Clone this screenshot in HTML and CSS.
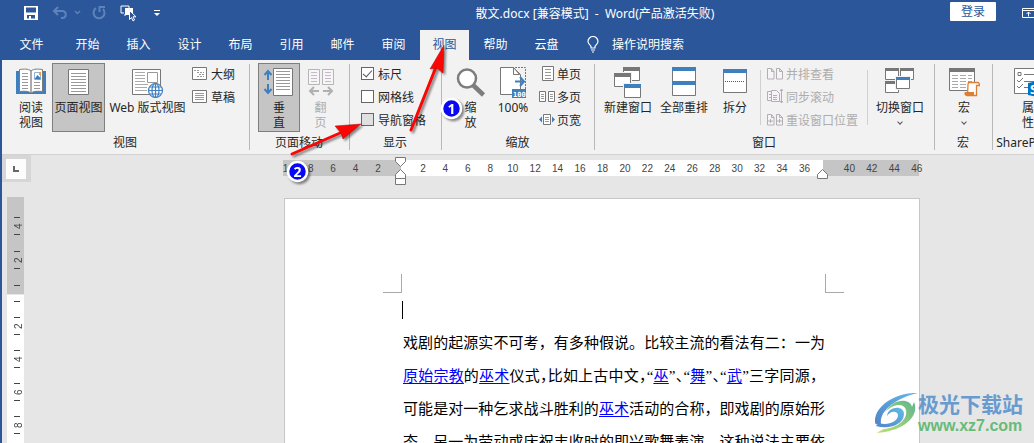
FILE: index.html
```html
<!DOCTYPE html>
<html lang="zh-CN">
<head>
<meta charset="utf-8">
<title>散文.docx - Word</title>
<link rel="stylesheet" href="styles.css">
</head>
<body>
<div class="window">
  <header class="titlebar">
    <div class="quick">
      <button class="qbtn save" aria-label="保存"><svg width="14" height="14" viewBox="0 0 14 14"><path fill="#fff" fill-rule="evenodd" d="M0 0h14v14H0zM2 1.500v5h10v-5zM3 9v3.500h2V10h2v2.500h4V9z"/></svg></button>
      <button class="qbtn undo" aria-label="撤消"><svg width="28" height="14" viewBox="0 0 28 14" fill="none" stroke="#5f82ba" stroke-width="2"><path d="M5 1L1 5l4 4M1 5h8c5 0 5 7 0 7H8"/><path stroke-width="1.300" d="M22 5l2.500 2.500L27 5"/></svg></button>
      <button class="qbtn redo" aria-label="重复"><svg width="14" height="14" viewBox="0 0 14 14" fill="none" stroke="#5f82ba" stroke-width="2"><path d="M4 2.200A5.500 5.500 0 1 0 11 3M7.500 6V1H13"/></svg></button>
      <button class="qbtn touch" aria-label="触摸/鼠标模式"><svg width="17" height="17" viewBox="0 0 17 17"><path d="M4 8H1V1h8v2M4 10h2" fill="none" stroke="#fff"/><path d="M5 3h8v6h-3L9 4v6H5z" fill="#fff"/><path d="M9.500 5.500v9l2-2 1.500 3.500 1.500-1-1.500-3.200h3z" fill="#2b579a" stroke="#fff"/></svg></button>
      <button class="qbtn" aria-label="自定义"><svg width="6" height="7" viewBox="0 0 6 7"><path fill="#fff" d="M0 0h6v1H0zM0 3h6L3 6z"/></svg></button>
    </div>
    <h1 class="doc-title">散文.docx [兼容模式]&nbsp; -&nbsp; Word(产品激活失败)</h1>
    <div class="account">
      <button class="login">登录</button>
      <button class="qbtn" aria-label="功能区显示选项"><svg width="13" height="10" viewBox="0 0 13 10"><path d="M.5.500h12v9H.5zM.5 2.500h12M6.500 8.500V4M4.500 6l2-2 2 2" fill="none" stroke="#fff"/></svg></button>
    </div>
  </header>

  <nav class="tabs">
    <button class="tab file">文件</button>
    <button class="tab">开始</button>
    <button class="tab">插入</button>
    <button class="tab">设计</button>
    <button class="tab">布局</button>
    <button class="tab">引用</button>
    <button class="tab">邮件</button>
    <button class="tab">审阅</button>
    <button class="tab active">视图</button>
    <button class="tab">帮助</button>
    <button class="tab">云盘</button>
    <button class="tell"><svg width="12" height="17" viewBox="0 0 12 17" fill="none" stroke="#fff" stroke-width="1.200"><path d="M4 12v-1.500C3.500 9 1 8 1 5.500a5 5 0 0 1 10 0C11 8 8.500 9 8 10.500V12zM4 14h4M5 16h2"/></svg>操作说明搜索</button>
  </nav>

  <section class="ribbon">
    <div class="group g-view">
      <div class="tools">
        <button class="big w38"><svg width="32" height="32" viewBox="0 0 32 32"><path fill="#3f7fbd" d="M1 4h4v20h9l2 1 2-1h9V4h4v23H1z"/><path fill="#fff" stroke="#7a7a7a" d="M16 4C13 1.500 9 2 4.500 2.500v22c5-.5 9-.5 11.500 1.500 2.500-2 6.500-2 11.500-1.500v-22C23 2 19 1.500 16 4zv22"/><path stroke="#999" d="M16 4v22M7 6.500h6M7 9.500h6M7 12.500h6M7 15.500h6M7 18.500h6M7 21.500h6M19 15.500h6M19 18.500h6M19 21.500h6"/><path fill="#fff" stroke="#8fb4d8" d="M19.500 5.500h6v7h-6z"/><path fill="#3f7fbd" d="M19.500 12l3-4 3 3v1.500z"/><path fill="#ed9b45" d="M24 5h2v3h-2z"/></svg><span>阅读<br>视图</span></button>
        <button class="big w53 on"><svg width="32" height="32" viewBox="0 0 32 32"><path fill="#fff" stroke="#777" d="M5.500 2.500h20v25h-20z"/><path stroke="#999" d="M8 6.500h15M8 9.500h15M8 12.500h15M8 15.500h15M8 18.500h15M8 21.500h15M8 24.500h15"/></svg><span>页面视图</span></button>
        <button class="big w83"><svg width="32" height="32" viewBox="0 0 32 32"><path fill="#fff" stroke="#777" d="M.5 2.500h28v25H.5z"/><path stroke="#aaa" d="M3 5.500h10M3 8.500h10M3 11.500h10M3 14.500h10M3 17.500h13M3 20.500h12M3 23.500h12"/><path fill="#fff" stroke="#999" d="M15.500 5.500h10v10h-10z"/><g fill="#fff" stroke="#3f7fbd" stroke-width="1.200"><circle cx="23.500" cy="23.500" r="7"/><ellipse cx="23.500" cy="23.500" rx="3.500" ry="7"/><path d="M23.500 16.500v14M16.500 23.500h14M18 20h11M18 27h11"/></g></svg><span>Web 版式视图</span></button>
        <div class="stack">
          <button class="small"><svg width="15" height="13" viewBox="0 0 15 13"><path fill="#fff" stroke="#777" d="M.5.500h14v12H.5z"/><path stroke="#999" stroke-dasharray="2 1" d="M2 3.500h5M5 5.500h7M7 7.500h6M5 9.500h7"/></svg>大纲</button>
          <button class="small"><svg width="15" height="13" viewBox="0 0 15 13"><path fill="#fff" stroke="#777" d="M.5.500h14v12H.5z"/><path stroke="#999" d="M3 3.500h9M3 5.500h9M3 7.500h9M3 9.500h9"/></svg>草稿</button>
        </div>
      </div>
      <h2>视图</h2>
    </div>

    <div class="group g-move">
      <div class="tools">
        <button class="big w42 on"><svg width="32" height="32" viewBox="0 0 32 32"><g fill="none" stroke="#3f7fbd" stroke-width="2"><path d="M5 5v8M1.500 8L5 4l3.500 4M5 17v9M1.500 22L5 26l3.500-4"/></g><path fill="#fff" stroke="#777" d="M10.500 1.500h19v27h-19z"/><path stroke="#999" d="M13 4.500h14M13 7.500h14M13 10.500h14M13 13.500h14M13 16.500h14M13 19.500h14M13 22.500h14"/></svg><span>垂<br>直</span></button>
        <button class="big w37" disabled><svg width="28" height="32" viewBox="0 0 28 32"><path fill="#f8f5f8" stroke="#b5b5b5" d="M1.500 2.500h11v15h-11zM15.500 2.500h11v15h-11z"/><path stroke="#c4bcc4" d="M4 5.500h6M4 8.500h6M4 11.500h6M4 14.500h6M18 5.500h6M18 8.500h6M18 11.500h6M18 14.500h6"/><path fill="none" stroke="#b0b0b0" stroke-width="2" d="M3 24h9M7 20l-4 4 4 4M16 24h9M21 20l4 4-4 4"/></svg><span>翻<br>页</span></button>
      </div>
      <h2>页面移动</h2>
    </div>

    <div class="group g-show">
      <div class="tools stack">
        <label class="check"><input type="checkbox" checked>标尺</label>
        <label class="check"><input type="checkbox">网格线</label>
        <label class="check"><input type="checkbox" class="hover">导航窗格</label>
      </div>
      <h2>显示</h2>
    </div>

    <div class="group g-zoom">
      <div class="tools">
        <button class="big w37"><svg width="32" height="32" viewBox="0 0 32 32"><path stroke="#7d7d7d" stroke-width="4.500" d="M18 18l10.500 10"/><circle cx="12" cy="11.500" r="9" fill="#fff" stroke="#7d7d7d" stroke-width="2.500"/></svg><span>缩<br>放</span></button>
        <button class="big w44"><svg width="30" height="32" viewBox="0 0 30 32"><path fill="none" stroke="#777" stroke-dasharray="2 1" d="M17 .5h10.500V22"/><path fill="#fff" stroke="#777" d="M2.500.500h13l7 7v20h-20z"/><path fill="#fff" stroke="#777" d="M15.500.500v7h6z"/><path fill="none" stroke="#3f7fbd" stroke-width="2" d="M17 14.500h9M22 10l4 4.500-4 4.500"/><path fill="#3f7fbd" d="M14 22h14v9H14z"/><text x="15" y="30" class="hundred">100</text></svg><span>100%</span></button>
        <div class="stack">
          <button class="small"><svg width="15" height="17" viewBox="0 0 15 17"><path fill="#fff" stroke="#777" d="M2.500 1.500h11v14h-11z"/><path stroke="#999" d="M5 4.500h6M5 7.500h6M5 10.500h6M5 13.500h6"/></svg>单页</button>
          <button class="small"><svg width="17" height="13" viewBox="0 0 17 13"><path fill="#fff" stroke="#777" d="M.5 1.500h6v10h-6zM9.500 1.500h6v10h-6z"/><path stroke="#999" d="M2 4.500h3M2 6.500h3M2 8.500h3M11 4.500h3M11 6.500h3M11 8.500h3"/></svg>多页</button>
          <button class="small"><svg width="17" height="13" viewBox="0 0 17 13"><path fill="#fff" stroke="#777" d="M4.500 1.500h7v10h-7z"/><path stroke="#999" d="M6 4.500h4M6 6.500h4M6 8.500h4"/><path fill="#3f7fbd" d="M3 3.500v6L0 6.500zM13 3.500v6l3-3z"/></svg>页宽</button>
        </div>
      </div>
      <h2>缩放</h2>
    </div>

    <div class="group g-window">
      <div class="tools">
        <button class="big w54"><svg width="32" height="32" viewBox="0 0 32 32"><path fill="#fff" stroke="#777" d="M11.500.500h16v13h-16z"/><path fill="#777" d="M11 0h17v4H11z"/><path fill="#f2f2f2" d="M1 5h19v16H1z"/><path fill="#fff" stroke="#777" d="M2.500 6.500h16v13h-16z"/><path fill="#777" d="M2 6h17v4H2z"/><path fill="#f2f2f2" d="M11 16h19v16H11z"/><path fill="#fff" stroke="#777" d="M12.500 17.500h16v13h-16z"/><path fill="#3f7fbd" d="M12 17h17v4H12z"/></svg><span>新建窗口</span></button>
        <button class="big w54"><svg width="32" height="32" viewBox="0 0 32 32"><path fill="#fff" stroke="#777" d="M4.500.500h23v28h-23z"/><path fill="#3f7fbd" d="M4 0h24v4H4zM4 14h24v4H4z"/></svg><span>全部重排</span></button>
        <button class="big w44"><svg width="32" height="32" viewBox="0 0 32 32"><path fill="#fff" stroke="#777" d="M4.500 2.500h23v23h-23z"/><path fill="#3f7fbd" d="M4 2h24v4H4z"/><path stroke="#555" stroke-dasharray="1 1" d="M6 14.500h20"/></svg><span>拆分</span></button>
        <div class="stack ruled">
          <button class="small" disabled><svg width="16" height="13" viewBox="0 0 16 13" fill="#f8f3f8" stroke="#b0b0b0"><path d="M.5 1.500h4l2.500 3v7.500H.5zM9.500 1.500h3l3 3v7.500h-6zM4.500 1.500v3H7M12.500 1.500v3h3"/></svg>并排查看</button>
          <button class="small" disabled><svg width="16" height="15" viewBox="0 0 16 15" fill="#f8f3f8" stroke="#b0b0b0"><path d="M4 2.500H.5v9H4M4.500 1.500h5l3 3v8h-8zM14.500 0v14M13 2l1.500-2L16 2M13 12l1.500 2 1.500-2M6 6.500h4M6 8.500h4M6 10.500h4M2 5.500h2M2 8.500h2"/></svg>同步滚动</button>
          <button class="small" disabled><svg width="16" height="13" viewBox="0 0 16 13" fill="#f8f3f8" stroke="#b0b0b0"><path d="M.5 1.500h4l2.500 3v7.500H.5zM9.500 1.500h3l3 3v7.500h-6zM4.500 1.500v3H7M12.500 1.500v3h3M1 8h5M3.500 6v4M10 8h5M12.500 6v4"/></svg>重设窗口位置</button>
        </div>
        <button class="big w60"><svg width="32" height="32" viewBox="0 0 32 32"><g fill="#fff" stroke="#777"><path d="M1.500 1.500h13v11h-13zM16.500 1.500h13v11h-13zM1.500 14.500h13v11h-13z"/></g><path fill="#777" d="M1 1h14v3H1zM16 1h14v3H16zM1 14h11v3H1z"/><path fill="#f2f2f2" d="M11 9h16v14H11z"/><path fill="#fff" stroke="#777" d="M12.500 10.500h13v11h-13z"/><path fill="#3f7fbd" d="M12 10h14v3H12z"/></svg><span>切换窗口</span><i class="chev"></i></button>
      </div>
      <h2>窗口</h2>
    </div>

    <div class="group g-macro">
      <div class="tools">
        <button class="big w44"><svg width="32" height="32" viewBox="0 0 32 32"><path fill="#fff" stroke="#777" d="M1.500 1.500h25v22h-25z"/><path fill="#777" d="M1 1h26v4H1z"/><path stroke="#aaa" stroke-dasharray="6 2" d="M4 8.500h20M4 11.500h20M4 14.500h20M4 17.500h16M4 20.500h14"/><path fill="#fff" stroke="#dd7f32" stroke-width="1.300" d="M20.500 15.500h9c2 0 2 3 2 3h-3v10h-9l.5-11z"/><path fill="#dd7f32" d="M17 25h9v4h-8c-2-1-2-3-1-4z"/></svg><span>宏</span><i class="chev"></i></button>
      </div>
      <h2>宏</h2>
    </div>

    <div class="group g-share">
      <div class="tools">
        <button class="big w44"><svg width="32" height="32" viewBox="0 0 32 32"><path fill="#fff" stroke="#777" d="M2.500 1.500h28v25h-28z"/><g fill="none" stroke="#777"><path d="M6 5.500h3v3H6zM12 7.500h12M12 14.500h12M12 20.500h5"/><path d="M5 13l2 2 4-4M5 19l2 2 4-4"/></g><path fill="#0072c6" d="M16 16l14-3v18l-14-3z"/><text x="18" y="27" class="sp">S</text></svg><span>属<br>性</span></button>
      </div>
      <h2>SharePoint</h2>
    </div>
  </section>

  <main class="workspace">
    <div class="corner"><button aria-label="左对齐制表符"><svg width="6" height="6" viewBox="0 0 6 6"><path fill="#666" d="M0 0h2v4h4v2H0z"/></svg></button></div>
    <div class="hruler">
      <div class="scale">
        <span>10</span><span>8</span><span>6</span><span>4</span><span>2</span><span></span><span>2</span><span>4</span><span>6</span><span>8</span><span>10</span><span>12</span><span>14</span><span>16</span><span>18</span><span>20</span><span>22</span><span>24</span><span>26</span><span>28</span><span>30</span><span>32</span><span>34</span><span>36</span><span></span><span>40</span><span>42</span><span>44</span><span>46</span>
      </div>
      <svg class="indent-left" width="12" height="28" viewBox="0 0 12 28"><path fill="#fff" stroke="#777" d="M.5.500h10v4l-5 5-5-5zM5.500 12.500l5 5v4H.5v-4zM.5 21.500h10v6H.5z"/></svg>
      <svg class="indent-right" width="12" height="11" viewBox="0 0 12 11"><path fill="#fff" stroke="#777" d="M5.500.500l5 5v4H.5v-4z"/></svg>
    </div>
    <div class="vruler">
      <div class="vpart margin"><b>4</b><b>2</b><i></i></div>
      <div class="vpart body"><i></i><b>2</b><b>4</b><b>6</b><b>8</b></div>
    </div>
    <article class="page">
      <div class="marks"><i class="mark-l"></i><i class="mark-r"></i></div>
      <div class="caret-line"><i class="caret"></i></div>
      <p>戏剧的起源实不可考，有多种假说。比较主流的看法有二：一为</p>
      <p><a href="#">原始宗教</a>的<a href="#">巫术</a>仪式<s>，</s>比如上古中文<s>，</s>“<a href="#">巫</a>”<s>、</s>“<a href="#">舞</a>”<s>、</s>“<a href="#">武</a>”三字同源，</p>
      <p>可能是对一种乞求战斗胜利的<a href="#">巫术</a>活动的合称，即戏剧的原始形</p>
      <p>态。另一为劳动或庆祝丰收时的即兴歌舞表演。这种说法主要依</p>
    </article>
  </main>

  <svg class="notes" width="470" height="190" viewBox="0 0 470 190">
    <g fill="#fb0505" stroke="#fb0505">
      <path stroke-width="3" stroke-linecap="round" d="M411 130L436 67M292 154L340 133"/>
      <path stroke="#a01010" stroke-width=".5" d="M444 45L443 73L437 68L430 69zM361 124L343 139L341 133L335 126z"/>
    </g>
    <g fill="#0808f5" stroke="#fff" stroke-width="2.500"><circle cx="451.500" cy="108.500" r="9.500"/><circle cx="297.500" cy="171.500" r="9.500"/></g>
    <text x="451.500" y="114">1</text><text x="297.500" y="177">2</text>
  </svg>

  <div class="watermark">
    <svg width="44" height="42" viewBox="0 0 44 42"><defs><linearGradient id="sw" x1="1" y1="0" x2="0" y2="1"><stop offset="0" stop-color="#62b9e8"/><stop offset="1" stop-color="#5385c6"/></linearGradient><linearGradient id="gr" x1="1" y1="0" x2="0" y2="1"><stop offset="0" stop-color="#5fb58d"/><stop offset="1" stop-color="#c0e070"/></linearGradient></defs><path fill="url(#sw)" d="M44 0C24-1 0 12 1 29c0 3 3 3 6 2C5 18 22 5 44 0z"/><path fill="url(#sw)" d="M5 30c8 3 19-1 19-8-1-5-8-4-11 1 1-10 17-11 17-2 0 10-14 16-28 12z"/><path fill="url(#gr)" d="M40 9c6 14-10 29-37 31 2-2 5-3 7-4 14-1 24-10 22-19-2-7-12-7-21 2C18 6 36 4 38 14z"/></svg>
    <div class="wm-text"><strong>极光下载站</strong><span>www.xz7.com</span></div>
  </div>
</div>
</body>
</html>
```
FILE: styles.css
```css
* { box-sizing: border-box; }
body {
  margin: 0;
  font-family: "Noto Sans", "Noto Sans CJK SC", sans-serif;
  font-size: 12px;
  color: #262626;
}
button {
  margin: 0;
  padding: 0;
  border: 0;
  background: none;
  font: inherit;
  color: inherit;
  white-space: nowrap;
}
h1, h2, p { margin: 0; font-size: inherit; font-weight: 400; }
svg { display: block; flex: none; }
.window {
  position: relative;
  display: flex;
  flex-direction: column;
  height: 100vh;
  overflow: hidden;
  border-left: 2px solid #2b579a;
  background: #e6e6e6;
}

.titlebar {
  display: flex;
  flex: none;
  height: 30px;
  padding-bottom: 4px;
  align-items: center;
  background: #2b579a;
  color: #fff;
}
.quick {
  display: flex;
  align-items: center;
  width: 238px;
  padding-left: 22px;
}
.save { margin-right: 15px; }
.undo { margin-right: 11px; }
.redo { margin-right: 14px; }
.touch { margin-right: 17px; }
.doc-title { flex: 1; text-align: center; }
.account {
  display: flex;
  align-items: center;
  gap: 26px;
  width: 84px;
}
.login {
  flex: none;
  width: 46px;
  height: 19px;
  margin-top: -3px;
  border-radius: 1px;
  background: #fff;
  color: #2b579a;
  line-height: 18px;
}

.tabs {
  display: flex;
  flex: none;
  gap: 2px;
  height: 30px;
  background: #2b579a;
  color: #fff;
}
.tab { width: 49px; padding-bottom: 2px; }
.file { width: 59px; }
.active { background: #f2f2f2; color: #2b579a; }
.tell {
  display: flex;
  align-items: center;
  gap: 13px;
  padding: 0 0 2px 14px;
}

.ribbon {
  display: flex;
  flex: none;
  height: 95px;
  overflow: hidden;
  border-bottom: 1px solid #d2d2d2;
  background: #f2f2f2;
}
.group {
  position: relative;
  display: flex;
  flex: none;
  flex-direction: column;
  padding-top: 3px;
}
.group::after {
  content: "";
  position: absolute;
  right: 0;
  top: 4px;
  bottom: 4px;
  width: 1px;
  background: #b8b8b8;
}
.g-view { width: 248px; }
.g-move { width: 100px; }
.g-show { width: 92px; }
.g-zoom { width: 153px; }
.g-window { width: 340px; }
.g-macro { width: 58px; }
.g-share { width: 70px; }
.group h2 { padding: 3px 2px 0 0; text-align: center; line-height: 16px; }
.tools { display: flex; height: 69px; gap: 2px; }
.g-view .tools { padding-left: 10px; }
.g-move .tools { padding-left: 8px; }
.g-show .tools { padding-left: 11px; }
.g-zoom .tools { padding-left: 10px; }
.g-window .tools { padding-left: 6px; }
.g-macro .tools, .g-share .tools { justify-content: center; }
.big {
  display: flex;
  flex: none;
  flex-direction: column;
  align-items: center;
  padding-top: 4px;
  line-height: 15px;
}
.big svg { margin-bottom: 1px; }
.big span { text-align: center; }
.big.on { padding-top: 3px; border: 1px solid #7f7f7f; background: #c5c5c5; }
.w37 { width: 37px; }
.w38 { width: 38px; }
.w42 { width: 42px; }
.w44 { width: 44px; }
.w53 { width: 53px; }
.w54 { width: 54px; }
.w60 { width: 56px; }
.w83 { width: 81px; }
button:disabled { color: #adadad; }
.stack.stack { display: flex; flex-direction: column; gap: 0; }
.small, .check {
  display: flex;
  align-items: center;
  gap: 4px;
  height: 23px;
  padding-bottom: 2px;
}
.g-view .stack, .g-zoom .stack { padding-left: 2px; }
.g-zoom .small svg { width: 17px; }
.g-zoom .small { gap: 1px; }
.ruled {
  margin: 0 2px 0 1px;
  padding: 0 10px 0 7px;
  background: linear-gradient(#d0d0d0, #d0d0d0) left 7px / 1px 55px no-repeat, linear-gradient(#d0d0d0, #d0d0d0) right 7px / 1px 55px no-repeat;
}
.ruled .small { gap: 3px; }
.check input {
  appearance: none;
  width: 13px;
  height: 13px;
  margin: 0;
  border: 1px solid #666;
  background: #fff;
}
.check input:checked::after {
  content: "";
  display: block;
  width: 4px;
  height: 8px;
  margin: 0 auto;
  border: solid #555;
  border-width: 0 1px 1px 0;
  transform: rotate(42deg);
}
.check input.hover { background: #e0e0e0; }
.chev {
  width: 4px;
  height: 4px;
  margin-top: 5px;
  border: solid #555;
  border-width: 0 1px 1px 0;
  transform: rotate(45deg);
}
.hundred { font: 700 7px "DejaVu Sans Mono", monospace; fill: #fff; }
.sp { font: 700 13px "Open Sans", sans-serif; fill: #fff; }

.workspace {
  display: grid;
  flex: 1;
  min-height: 0;
  grid-template-columns: 282px minmax(0, 1fr);
  grid-template-rows: 42px minmax(0, 1fr);
  padding-right: 114px;
}
.corner {
  width: 29px;
  height: 27px;
  padding: 4px;
  background: #d6d6d6;
}
.corner button {
  display: grid;
  place-items: center;
  width: 20px;
  height: 20px;
  background: #fcfcfc;
}
.hruler {
  position: relative;
  height: 16px;
  margin: 5px 1px 0 -1px;
  background: linear-gradient(90deg, #c5c5c5 118px, #fff 118px, #fff calc(100% - 96px), #c5c5c5 calc(100% - 96px));
}
.scale {
  display: grid;
  grid-template-columns: repeat(29, minmax(0, 1fr));
  margin: 0 -9px 0 -6px;
  color: #444;
  font: 10px/17px "Liberation Sans", sans-serif;
  text-align: center;
}
.indent-left { position: absolute; left: 112px; top: -3px; }
.indent-right { position: absolute; right: 90px; top: 9px; }
.vruler {
  display: flex;
  flex-direction: column;
  width: 17px;
  margin-left: 5px;
  color: #444;
}
.vpart {
  display: flex;
  flex: none;
  flex-direction: column;
  align-items: center;
  padding-left: 3px;
}
.margin { gap: 16px; height: 97px; padding-top: 20px; background: #c5c5c5; }
.body { flex: 1; gap: 15px; margin-top: 1px; padding-top: 6px; background: #fff; }
.vpart i { width: 6px; height: 1px; background: #444; }
.vpart b {
  display: grid;
  place-items: center;
  flex: none;
  width: 6px;
  height: 18px;
  border: solid #444;
  border-width: 1px 0;
  writing-mode: vertical-rl;
  transform: rotate(180deg);
  font: 10px/10px "Liberation Sans", sans-serif;
}
.page {
  margin-top: 1px;
  padding: 75px 94px 0 118px;
  overflow: hidden;
  border: solid #c6c6c6;
  border-width: 1px 1px 0;
  background: #fff;
  color: #000;
  font: 15px/33px "Liberation Serif", "Noto Sans CJK SC", sans-serif;
}
.marks { display: flex; justify-content: space-between; margin: 0 -19px 0 -20px; }
.marks i { width: 19px; height: 19px; border: solid #aaa; border-width: 0 0 1px; }
.marks .mark-l { border-right-width: 1px; }
.marks .mark-r { border-left-width: 1px; }
.caret-line { display: flex; align-items: center; height: 34px; margin-left: -1px; }
.caret { width: 1px; height: 18px; background: #000; }
.page p { height: 33px; text-align: justify; text-align-last: justify; white-space: nowrap; }
.page a { color: #00f; text-underline-offset: 2px; }
.page s { text-decoration: none; font-feature-settings: "halt"; }

.notes { position: absolute; left: -2px; top: 0; pointer-events: none; filter: drop-shadow(2px 2px 1px rgb(0 0 0 / 45%)); }
.notes text { fill: #fff; font: 700 14px "Open Sans", sans-serif; text-anchor: middle; }
.watermark {
  position: absolute;
  right: 11px;
  bottom: 8px;
  display: flex;
  align-items: flex-end;
}
.wm-text { display: flex; flex-direction: column; font-family: "Liberation Sans", "Noto Sans CJK SC", sans-serif; }
.wm-text strong { color: #689bce; font-size: 21px; line-height: 24px; }
.wm-text span { color: #66bb79; font-size: 16px; font-weight: 700; line-height: 18px; }
```
